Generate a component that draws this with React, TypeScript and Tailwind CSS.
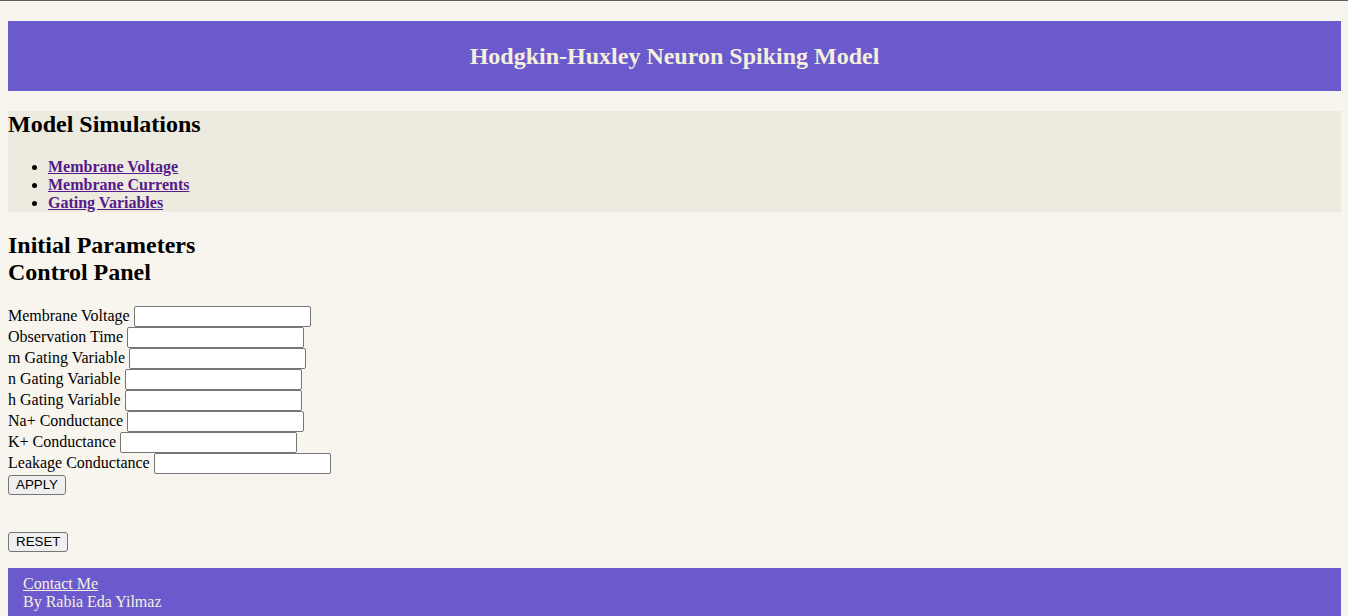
import React, { useState } from "react";

const fields = [
  "Membrane Voltage",
  "Observation Time",
  "m Gating Variable",
  "n Gating Variable",
  "h Gating Variable",
  "Na+ Conductance",
  "K+ Conductance",
  "Leakage Conductance",
];

const links = ["Membrane Voltage", "Membrane Currents", "Gating Variables"];

const App = () => {
  const [values, setValues] = useState<Record<string, string>>({});

  const handleChange = (name: string, value: string) => {
    setValues({ ...values, [name]: value });
  };

  return (
    <div className="min-h-[616px] bg-[#f8f5ee] font-['Liberation_Serif',serif] text-base text-black border-t border-[#5f5f5f]">
      <div className="ml-2 mr-[7px] pt-5">
        {/* Header */}
        <header className="h-[70px] bg-[#6a5acd] flex items-center justify-center">
          <h1 className="text-[24px] font-bold text-[#f5f0dc] leading-[27px]">
            Hodgkin-Huxley Neuron Spiking Model
          </h1>
        </header>

        {/* Simulations nav */}
        <section className="mt-5 bg-[#edeadf]">
          <h2 className="text-[24px] font-bold leading-[27px]">
            Model Simulations
          </h2>
          <ul className="mt-5 pl-10 list-disc">
            {links.map((l) => (
              <li key={l} className="leading-[18px]">
                <a href="#" className="font-bold text-[#551a8b] underline">
                  {l}
                </a>
              </li>
            ))}
          </ul>
        </section>

        {/* Parameters */}
        <h2 className="mt-5 text-[24px] font-bold leading-[27px]">
          Initial Parameters
        </h2>
        <h2 className="text-[24px] font-bold leading-[27px]">Control Panel</h2>

        <form className="mt-5" onSubmit={(e) => e.preventDefault()}>
          {fields.map((f) => (
            <div key={f} className="flex items-center h-[21px]">
              <label className="leading-[18px] -mt-px">{f}</label>
              <input
                type="text"
                value={values[f] || ""}
                onChange={(e) => handleChange(f, e.target.value)}
                className="ml-1 w-[177px] h-[21px] bg-white border border-[#767676] rounded-[2px] px-0.5 text-[13px]"
              />
            </div>
          ))}
          <button
            type="submit"
            className="block mt-px h-5 px-[7px] bg-[#efefef] border border-[#767676] rounded-[3px] font-['Liberation_Sans',Arial,sans-serif] text-[13.33px] leading-4"
          >
            APPLY
          </button>
        </form>

        <button
          type="button"
          onClick={() => setValues({})}
          className="block mt-[37px] h-5 px-[7px] bg-[#efefef] border border-[#767676] rounded-[3px] font-['Liberation_Sans',Arial,sans-serif] text-[13.33px] leading-4"
        >
          RESET
        </button>

        {/* Footer */}
        <footer className="mt-4 bg-[#6a5acd] px-[15px] pt-[7px] pb-2 text-[#f5f0dc]">
          <a href="#" className="underline leading-[18px] block w-fit">
            Contact Me
          </a>
          <p className="leading-[18px]">By Rabia Eda Yilmaz</p>
        </footer>
      </div>
    </div>
  );
};

export default App;
